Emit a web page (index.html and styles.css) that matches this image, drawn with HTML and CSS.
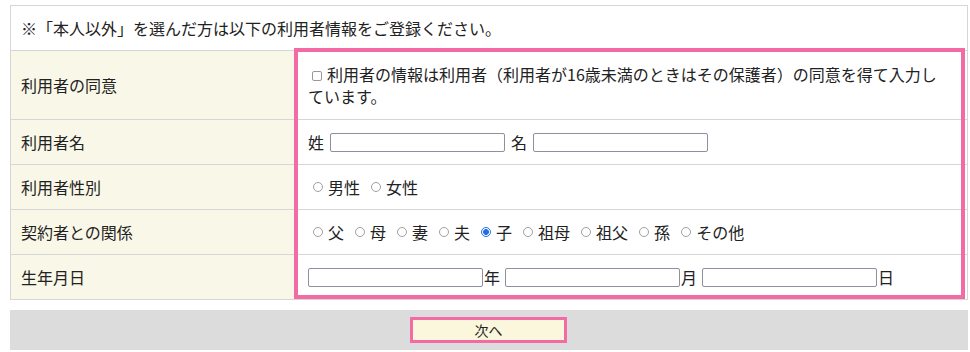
FILE: index.html
```html
<!DOCTYPE html>
<html lang="ja">
<head>
    <meta charset="UTF-8">
    <meta name="viewport" content="width=device-width, initial-scale=1.0">
    <title>利用者情報の登録</title>
    <link rel="stylesheet" href="styles.css">
</head>
<body>
    <div class="page">
        <div class="form-table">
            <div class="note">※「本人以外」を選んだ方は以下の利用者情報をご登録ください。</div>

            <div class="label row-1 tall">利用者の同意</div>
            <div class="value row-1 tall">
                <label class="agree"><input type="checkbox" class="check">利用者の情報は利用者（利用者が16歳未満のときはその保護者）の同意を得て入力しています。</label>
            </div>

            <div class="label row-2">利用者名</div>
            <div class="value row-2">
                <span class="unit-before">姓</span><input type="text" class="text-input">
                <span class="unit-between">名</span><input type="text" class="text-input">
            </div>

            <div class="label row-3">利用者性別</div>
            <div class="value row-3">
                <label class="choice"><input type="radio" name="sex" class="radio">男性</label>
                <label class="choice"><input type="radio" name="sex" class="radio">女性</label>
            </div>

            <div class="label row-4">契約者との関係</div>
            <div class="value row-4">
                <label class="choice"><input type="radio" name="rel" class="radio">父</label>
                <label class="choice"><input type="radio" name="rel" class="radio">母</label>
                <label class="choice"><input type="radio" name="rel" class="radio">妻</label>
                <label class="choice"><input type="radio" name="rel" class="radio">夫</label>
                <label class="choice"><input type="radio" name="rel" class="radio" checked>子</label>
                <label class="choice"><input type="radio" name="rel" class="radio">祖母</label>
                <label class="choice"><input type="radio" name="rel" class="radio">祖父</label>
                <label class="choice"><input type="radio" name="rel" class="radio">孫</label>
                <label class="choice"><input type="radio" name="rel" class="radio">その他</label>
            </div>

            <div class="label row-5">生年月日</div>
            <div class="value row-5">
                <input type="text" class="text-input"><span class="unit-after">年</span>
                <input type="text" class="text-input"><span class="unit-after">月</span>
                <input type="text" class="text-input"><span class="unit-after">日</span>
            </div>

            <!-- 入力欄の強調枠 -->
            <div class="highlight"></div>
        </div>

        <div class="actions">
            <button class="next-btn">次へ</button>
        </div>
    </div>
</body>
</html>
```

FILE: styles.css
```css
body {
    margin: 0;
    font-family: "Noto Sans CJK JP", "Noto Sans", sans-serif;
    font-size: 16px;
    color: #222;
    background-color: #fff;
}

.page {
    width: 958px;
    padding: 5px 0 0 10px;
}

.form-table {
    display: grid;
    grid-template-columns: 284px 1fr;
    border: 1px solid #d6d6d6;
}

.note {
    grid-column: 1 / 3;
    grid-row: 1;
    height: 44px;
    padding: 0 10px;
    display: flex;
    align-items: center;
}

.label, .value {
    box-sizing: border-box;
    height: 45px;
    border-top: 1px solid #d6d6d6;
    display: flex;
    align-items: center;
}

.label {
    grid-column: 1;
    padding: 0 10px;
    background-color: #f9f7e7;
    border-right: 1px solid #d6d6d6;
}

.value {
    grid-column: 2;
    padding: 0 22px 0 13px;
}

.row-1 { grid-row: 2; }
.row-2 { grid-row: 3; }
.row-3 { grid-row: 4; }
.row-4 { grid-row: 5; }
.row-5 { grid-row: 6; }

.tall {
    height: 69px;
}

.agree {
    line-height: 22px;
}

.check {
    appearance: none;
    box-sizing: border-box;
    width: 10px;
    height: 10px;
    margin: 0 5px 0 4px;
    border: 1px solid #999;
    border-radius: 2px;
    vertical-align: 0;
}

.text-input {
    box-sizing: border-box;
    width: 175px;
    height: 19px;
    margin: 0;
    border: 1px solid #8f8f9d;
    border-radius: 2px;
    font-size: 13px;
}

.unit-before {
    margin-right: 6px;
}

.unit-between {
    margin: 0 6px;
}

.unit-after {
    margin: 0 5px 0 1px;
}

.choice {
    display: inline-flex;
    align-items: center;
    margin-right: 6px;
}

.radio {
    appearance: none;
    box-sizing: border-box;
    width: 10px;
    height: 10px;
    margin: 0 5px 0 5px;
    border: 1px solid #a0a0a0;
    border-radius: 50%;
    background-color: #fff;
}

.radio:checked {
    border-color: #1f6fe5;
    background: radial-gradient(circle, #1f6fe5 0 2.6px, #fff 3.2px);
}

.highlight {
    grid-column: 2;
    grid-row: 2 / 7;
    margin: -2px 2px 0 -1px;
    border: 4px solid #f26ba5;
    pointer-events: none;
}

.actions {
    margin-top: 10px;
    height: 40px;
    background-color: #dcdcdc;
    display: flex;
    justify-content: center;
    padding-top: 7px;
    box-sizing: border-box;
}

.next-btn {
    box-sizing: border-box;
    width: 157px;
    height: 26px;
    margin-right: 1px;
    border: 3px solid #f26ba5;
    background-color: #faf7dc;
    font-family: "Noto Sans CJK JP", sans-serif;
    font-size: 14px;
    color: #222;
    padding: 0;
    cursor: pointer;
}
```
